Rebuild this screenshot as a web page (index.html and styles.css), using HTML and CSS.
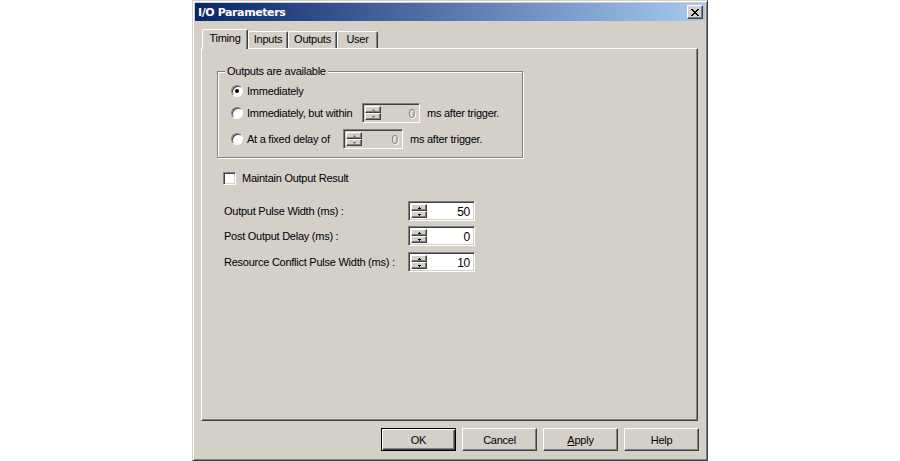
FILE: index.html
```html
<!DOCTYPE html>
<html lang="en">
<head>
    <meta charset="UTF-8">
    <title>I/O Parameters</title>
    <link rel="stylesheet" href="styles.css">
</head>
<body>

    <div class="dialog">
        <div class="title-bar">
            <span class="title">I/O Parameters</span>
            <button class="close-btn">
                <svg width="8" height="7" viewBox="0 0 8 7" shape-rendering="crispEdges">
                    <path d="M0 0h2v1h-2zM6 0h2v1h-2zM1 1h2v1h-2zM5 1h2v1h-2zM2 2h4v1h-4zM3 3h2v1h-2zM2 4h4v1h-4zM1 5h2v1h-2zM5 5h2v1h-2zM0 6h2v1h-2zM6 6h2v1h-2z" fill="#000"/>
                </svg>
            </button>
        </div>

        <div class="tabs">
            <div class="tab active tab-timing">Timing</div>
            <div class="tab tab-inputs">Inputs</div>
            <div class="tab tab-outputs">Outputs</div>
            <div class="tab tab-user">User</div>
        </div>

        <div class="panel">
            <!-- Output availability -->
            <fieldset class="group">
                <legend>Outputs are available</legend>
                <div class="row">
                    <span class="radio checked"></span>
                    <span>Immediately</span>
                </div>
                <div class="row row-within">
                    <span class="radio"></span>
                    <span class="label-within">Immediately, but within</span>
                    <div class="spin spin-small disabled">
                        <div class="spin-btns">
                            <span class="spin-btn"><svg width="3" height="2" viewBox="0 0 3 2" shape-rendering="crispEdges"><path d="M1 0h1v1h1v1h-3v-1h1z"/></svg></span>
                            <span class="spin-btn"><svg width="3" height="2" viewBox="0 0 3 2" shape-rendering="crispEdges"><path d="M0 0h3v1h-1v1h-1v-1h-1z"/></svg></span>
                        </div>
                        <span class="spin-value">0</span>
                    </div>
                    <span class="after">ms after trigger.</span>
                </div>
                <div class="row row-fixed">
                    <span class="radio"></span>
                    <span class="label-fixed">At a fixed delay of</span>
                    <div class="spin spin-small spin-wide disabled">
                        <div class="spin-btns">
                            <span class="spin-btn"><svg width="3" height="2" viewBox="0 0 3 2" shape-rendering="crispEdges"><path d="M1 0h1v1h1v1h-3v-1h1z"/></svg></span>
                            <span class="spin-btn"><svg width="3" height="2" viewBox="0 0 3 2" shape-rendering="crispEdges"><path d="M0 0h3v1h-1v1h-1v-1h-1z"/></svg></span>
                        </div>
                        <span class="spin-value">0</span>
                    </div>
                    <span class="after">ms after trigger.</span>
                </div>
            </fieldset>

            <div class="row check-row">
                <span class="checkbox"></span>
                <span>Maintain Output Result</span>
            </div>

            <div class="row field-row first">
                <span class="field-label">Output Pulse Width (ms) :</span>
                <div class="spin">
                    <div class="spin-btns">
                        <span class="spin-btn"><svg width="3" height="2" viewBox="0 0 3 2" shape-rendering="crispEdges"><path d="M1 0h1v1h1v1h-3v-1h1z"/></svg></span>
                        <span class="spin-btn"><svg width="3" height="2" viewBox="0 0 3 2" shape-rendering="crispEdges"><path d="M0 0h3v1h-1v1h-1v-1h-1z"/></svg></span>
                    </div>
                    <span class="spin-value">50</span>
                </div>
            </div>
            <div class="row field-row">
                <span class="field-label">Post Output Delay (ms) :</span>
                <div class="spin">
                    <div class="spin-btns">
                        <span class="spin-btn"><svg width="3" height="2" viewBox="0 0 3 2" shape-rendering="crispEdges"><path d="M1 0h1v1h1v1h-3v-1h1z"/></svg></span>
                        <span class="spin-btn"><svg width="3" height="2" viewBox="0 0 3 2" shape-rendering="crispEdges"><path d="M0 0h3v1h-1v1h-1v-1h-1z"/></svg></span>
                    </div>
                    <span class="spin-value">0</span>
                </div>
            </div>
            <div class="row field-row last">
                <span class="field-label">Resource Conflict Pulse Width (ms) :</span>
                <div class="spin">
                    <div class="spin-btns">
                        <span class="spin-btn"><svg width="3" height="2" viewBox="0 0 3 2" shape-rendering="crispEdges"><path d="M1 0h1v1h1v1h-3v-1h1z"/></svg></span>
                        <span class="spin-btn"><svg width="3" height="2" viewBox="0 0 3 2" shape-rendering="crispEdges"><path d="M0 0h3v1h-1v1h-1v-1h-1z"/></svg></span>
                    </div>
                    <span class="spin-value">10</span>
                </div>
            </div>
        </div>

        <div class="buttons">
            <button class="btn default">OK</button>
            <button class="btn">Cancel</button>
            <button class="btn"><u>A</u>pply</button>
            <button class="btn">Help</button>
        </div>
    </div>

</body>
</html>
```

FILE: styles.css
```css
body {
    margin: 0;
    background-color: #fff;
    font-family: "Liberation Sans", Arial, sans-serif;
    font-size: 11px;
    letter-spacing: -0.25px;
    color: #000;
}

.dialog {
    width: 516px;
    height: 461px;
    margin: 0 auto;
    box-sizing: border-box;
    background-color: #d4d0c8;
    border: 1px solid;
    border-color: #d4d0c8 #404040 #404040 #d4d0c8;
    box-shadow: inset 1px 1px #fff, inset -1px -1px #808080;
    padding: 2px;
    display: flex;
    flex-direction: column;
}

/* Title bar */
.title-bar {
    height: 18px;
    display: flex;
    align-items: center;
    justify-content: space-between;
    padding: 0 2px 0 3px;
    background: linear-gradient(to right, #0a246a, #a6caf0);
}

.title {
    color: #fff;
    font-family: "DejaVu Sans", sans-serif;
    font-weight: bold;
    font-size: 11px;
    letter-spacing: -0.4px;
}

.close-btn {
    width: 16px;
    height: 14px;
    padding: 0;
    box-sizing: border-box;
    border: 1px solid;
    border-color: #fff #404040 #404040 #fff;
    box-shadow: inset -1px -1px #808080;
    background-color: #d4d0c8;
    display: flex;
    align-items: center;
    justify-content: center;
}

/* Tabs */
.tabs {
    display: flex;
    align-items: flex-end;
    margin-top: 8px;
    padding-left: 7px;
    height: 19px;
}

.tab {
    height: 17px;
    box-sizing: border-box;
    border: 1px solid;
    border-bottom: none;
    border-color: #fff #404040 transparent #fff;
    border-radius: 2px 2px 0 0;
    box-shadow: inset -1px 0 #808080;
    text-align: center;
    line-height: 15px;
}

.tab.active {
    height: 20px;
    margin-bottom: -1px;
    position: relative;
    z-index: 1;
    background-color: #d4d0c8;
    line-height: 17px;
}

.tab-timing { width: 46px; }
.tab-inputs { width: 40px; }
.tab-outputs { width: 49px; }
.tab-user { width: 41px; }

.panel {
    margin-left: 6px;
    width: 497px;
    height: 373px;
    box-sizing: border-box;
    border: 1px solid;
    border-color: #fff #404040 #404040 #fff;
    box-shadow: inset -1px -1px #808080;
    padding: 16px 0 0 15px;
}

/* Group box */
.group {
    margin: 0;
    width: 306px;
    box-sizing: border-box;
    padding: 3px 0 8px 13px;
    border: 1px solid #808080;
    box-shadow: inset 1px 1px #fff, 1px 1px #fff;
}

.group legend {
    padding: 0 2px;
    margin-left: -6px;
    line-height: 13px;
    background-color: #d4d0c8;
}

.row {
    display: flex;
    align-items: center;
    height: 20px;
}

.row-within { margin-top: 2px; }
.row-fixed { margin-top: 6px; }

.label-within { width: 115px; }
.label-fixed { width: 96px; }

.after { margin-left: 7px; }

.radio {
    width: 12px;
    height: 12px;
    box-sizing: border-box;
    border-radius: 50%;
    border: 1px solid;
    border-color: #808080 #fff #fff #808080;
    box-shadow: inset 1px 1px #404040;
    background-color: #fff;
    margin-right: 4px;
    display: flex;
    align-items: center;
    justify-content: center;
}

.radio.checked::after {
    content: "";
    width: 4px;
    height: 4px;
    border-radius: 50%;
    background-color: #000;
}

.checkbox {
    width: 13px;
    height: 13px;
    box-sizing: border-box;
    border: 1px solid;
    border-color: #808080 #fff #fff #808080;
    box-shadow: inset 1px 1px #404040, inset -1px -1px #d4d0c8;
    background-color: #fff;
    margin-right: 6px;
}

.check-row {
    margin: 10px 0 0 6px;
}

/* Spin fields */
.spin {
    display: flex;
    width: 67px;
    height: 20px;
    box-sizing: border-box;
    border: 1px solid;
    border-color: #808080 #fff #fff #808080;
    box-shadow: inset 1px 1px #404040, inset -1px -1px #d4d0c8;
    background-color: #fff;
    padding: 2px;
}

.spin-small { width: 58px; }
.spin-wide { width: 60px; }

.spin-btns {
    display: flex;
    flex-direction: column;
    width: 16px;
}

.spin-btn {
    height: 8px;
    box-sizing: border-box;
    border: 1px solid;
    border-color: #fff #404040 #404040 #fff;
    box-shadow: inset -1px -1px #808080;
    background-color: #d4d0c8;
    display: flex;
    align-items: center;
    justify-content: center;
}

.spin-btn svg {
    fill: #000;
}

.spin-value {
    flex: 1;
    text-align: right;
    padding-right: 2px;
    line-height: 16px;
    font-size: 12px;
}

.spin.disabled {
    background-color: #d4d0c8;
}

.spin.disabled .spin-value {
    color: #808080;
    text-shadow: 1px 1px #fff;
}

.spin.disabled .spin-btn svg {
    fill: #808080;
}

.field-row {
    margin: 5px 0 0 7px;
}

.field-row.first { margin-top: 13px; }
.field-row.last { margin-top: 6px; }

.field-label {
    width: 184px;
}

/* Bottom buttons */
.buttons {
    display: flex;
    justify-content: flex-end;
    gap: 6px;
    margin-top: 7px;
    padding-right: 6px;
}

.btn {
    width: 75px;
    height: 23px;
    padding: 0;
    box-sizing: border-box;
    font-family: "Liberation Sans", Arial, sans-serif;
    font-size: 11px;
    letter-spacing: -0.25px;
    color: #000;
    background-color: #d4d0c8;
    border: 1px solid;
    border-color: #fff #404040 #404040 #fff;
    box-shadow: inset -1px -1px #808080;
}

.btn.default {
    border-color: #000;
    box-shadow: inset 1px 1px #fff, inset -1px -1px #404040, inset -2px -2px #808080;
}
```
